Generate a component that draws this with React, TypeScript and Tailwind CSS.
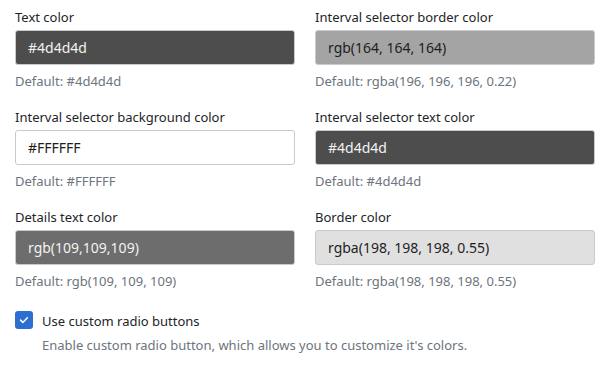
import { FC } from "react";

type ColorField = {
  label: string;
  value: string;
  fallback: string;
  box: string;
};

const _fields: ColorField[] = [
  {
    label: "Text color",
    value: "#4d4d4d",
    fallback: "#4d4d4d",
    box: "bg-[#4d4d4d] text-[#f2f2f2]",
  },
  {
    label: "Interval selector border color",
    value: "rgb(164, 164, 164)",
    fallback: "rgba(196, 196, 196, 0.22)",
    box: "bg-[#a4a4a4] text-[#1e1e1e]",
  },
  {
    label: "Interval selector background color",
    value: "#FFFFFF",
    fallback: "#FFFFFF",
    box: "bg-white text-[#1e1e1e]",
  },
  {
    label: "Interval selector text color",
    value: "#4d4d4d",
    fallback: "#4d4d4d",
    box: "bg-[#4d4d4d] text-[#f2f2f2]",
  },
  {
    label: "Details text color",
    value: "rgb(109,109,109)",
    fallback: "rgb(109, 109, 109)",
    box: "bg-[#6d6d6d] text-[#f2f2f2]",
  },
  {
    label: "Border color",
    value: "rgba(198, 198, 198, 0.55)",
    fallback: "rgba(198, 198, 198, 0.55)",
    box: "bg-[#e0e0e0] text-[#1e1e1e]",
  },
];

const Field: FC<{ field: ColorField }> = ({ field }) => (
  <div className="flex flex-col h-[100px]">
    <label className="text-[13px] leading-[20px] text-[#212529]">
      {field.label}
    </label>
    <div
      className={`mt-[3px] h-[35px] w-full flex items-center px-[12px] rounded-[3px] border border-[#c7cbd1] text-[14px] ${field.box}`}
    >
      {field.value}
    </div>
    <p className="mt-[6px] text-[13px] leading-[20px] text-[#6c757d]">
      Default: {field.fallback}
    </p>
  </div>
);

export default function App() {
  return (
    <div
      className="w-[606px] h-[374px] bg-white pl-[15px] pt-[7px]"
      style={{ fontFamily: '"Noto Sans", sans-serif' }}
    >
      <div className="w-[580px] grid grid-cols-2 gap-x-[20px]">
        {_fields.map((f, i) => (
          <Field key={i} field={f} />
        ))}
      </div>
      <div className="flex gap-[9px] pt-[4px]">
        <div className="size-[18px] rounded-[3px] bg-[#2d6fd1] flex items-center justify-center shrink-0">
          <svg viewBox="0 0 16 16" className="size-[12px]" fill="none">
            <path
              d="M3.5 8.2l3 3 6-6.2"
              stroke="white"
              strokeWidth="2"
              strokeLinecap="round"
              strokeLinejoin="round"
            />
          </svg>
        </div>
        <div className="flex flex-col">
          <span className="text-[13px] leading-[20px] text-[#212529]">
            Use custom radio buttons
          </span>
          <span className="mt-[4px] text-[13px] leading-[20px] text-[#6c757d]">
            Enable custom radio button, which allows you to customize it's
            colors.
          </span>
        </div>
      </div>
    </div>
  );
}
